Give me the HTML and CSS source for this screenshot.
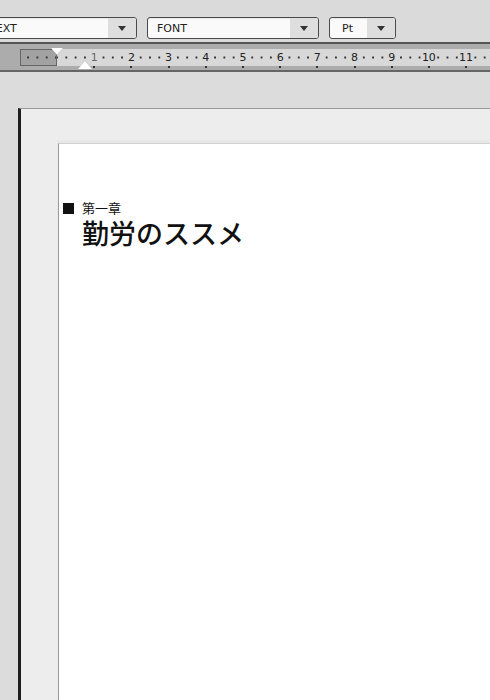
FILE: index.html
```html
<!DOCTYPE html>
<html lang="ja">
  <head>
    <meta charset="UTF-8" />
    <meta name="viewport" content="width=device-width, initial-scale=1.0" />
    <title>editor</title>
    <link rel="stylesheet" href="styles.css">
  </head>
  <body>
    <!-- toolbar with the three pickers -->
    <div class="toolbar">
      <div class="picker style-picker">
        <span class="picker-text">TEXT</span>
        <span class="picker-arrow"></span>
      </div>
      <div class="picker font-picker">
        <span class="picker-text">FONT</span>
        <span class="picker-arrow"></span>
      </div>
      <div class="picker size-picker">
        <span class="picker-text">Pt</span>
        <span class="picker-arrow"></span>
      </div>
    </div>

    <!-- ruler -->
    <div class="ruler">
      <div class="ruler-track">
        <div class="ruler-margin"></div>
        <div class="ruler-scale">
          <span class="num"><b>1</b></span>
          <span class="num"><b>2</b></span>
          <span class="num"><b>3</b></span>
          <span class="num"><b>4</b></span>
          <span class="num"><b>5</b></span>
          <span class="num"><b>6</b></span>
          <span class="num"><b>7</b></span>
          <span class="num"><b>8</b></span>
          <span class="num"><b>9</b></span>
          <span class="num"><b>10</b></span>
          <span class="num"><b>11</b></span>
        </div>
        <span class="indent-first"></span>
        <span class="indent-left"></span>
      </div>
    </div>

    <!-- document -->
    <div class="desk">
      <div class="sheet">
        <div class="page">
          <div class="chapter">
            <span class="mark"></span>
            <span>第一章</span>
          </div>
          <h1 class="title">勤労のススメ</h1>
        </div>
      </div>
    </div>
  </body>
</html>
```

FILE: styles.css
```css
body {
  margin: 0;
  padding: 0;
  width: 490px;
  height: 700px;
  overflow: hidden;
  background-color: #dcdcdc;
  font-family: "DejaVu Sans", sans-serif;
}

/* toolbar */
.toolbar {
  display: flex;
  height: 42px;
  box-sizing: border-box;
  padding-top: 17px;
  background-color: #dadada;
  overflow: hidden;
}
.picker {
  display: flex;
  flex-shrink: 0;
  height: 22px;
  box-sizing: border-box;
  border: 1px solid #4a4a4a;
  border-radius: 3px;
  background-color: #fafafa;
  box-shadow: inset 0 1px 0 #e6e6e6;
  overflow: hidden;
}
.picker-text {
  flex: 1;
  font-size: 11px;
  line-height: 22px;
  color: #222;
  padding-left: 9px;
}
.picker-arrow {
  width: 28px;
  background-color: #dedede;
  display: flex;
  align-items: center;
  justify-content: center;
}
.picker-arrow::before {
  content: "";
  border-left: 4px solid transparent;
  border-right: 4px solid transparent;
  border-top: 5px solid #333;
}
.style-picker {
  width: 154px;
  margin-left: -17px;
}
.style-picker .picker-text {
  padding-left: 5px;
}
.font-picker {
  width: 172px;
  margin-left: 10px;
}
.size-picker {
  width: 67px;
  margin-left: 10px;
}
.size-picker .picker-text {
  padding-left: 12px;
}

/* ruler */
.ruler {
  height: 30px;
  box-sizing: border-box;
  border-top: 2px solid #555;
  border-bottom: 2px solid #666;
  background-color: #acacac;
  padding-top: 5px;
}
.ruler-track {
  position: relative;
  display: flex;
  height: 17px;
  margin-left: 20px;
}
.ruler-margin {
  flex: 0 0 37px;
  box-sizing: border-box;
  border: 1px solid #666;
  background-color: #a2a2a2;
  background-image: radial-gradient(circle, #333 0.9px, transparent 1.3px);
  background-size: 9.3px 3px;
  background-repeat: repeat-x;
  background-position: calc(100% + 4.65px) center;
}
.ruler-scale {
  flex: 1;
  min-width: 0;
  display: flex;
  padding-left: 18.6px;
  background-color: #d8d8d8;
  background-image: radial-gradient(circle, #333 0.9px, transparent 1.3px);
  background-size: 9.3px 3px;
  background-repeat: repeat-x;
  background-position: -4.65px center;
}
.num {
  position: relative;
  flex: 0 0 37.2px;
  text-align: center;
  font-size: 11px;
  line-height: 17px;
  color: #222;
}
.num b {
  font-weight: normal;
  background-color: #d8d8d8;
  padding: 0 1px;
}
.num:first-child b {
  color: #666;
}
.num::after {
  content: "";
  position: absolute;
  left: 17.6px;
  bottom: -2px;
  width: 2px;
  height: 2px;
  background-color: #333;
}
.indent-first {
  position: absolute;
  left: 31px;
  top: -1px;
  border-left: 6px solid transparent;
  border-right: 6px solid transparent;
  border-top: 7px solid #fff;
  filter: drop-shadow(0 0 0.5px #666);
}
.indent-left {
  position: absolute;
  left: 58px;
  top: 12px;
  border-left: 7px solid transparent;
  border-right: 7px solid transparent;
  border-bottom: 8px solid #fff;
  filter: drop-shadow(0 0 0.5px #888);
}

/* document */
.desk {
  padding: 36px 0 0 18px;
}
.sheet {
  border-left: 3px solid #1e1e1e;
  border-top: 1px solid #999;
  background-color: #ededed;
  padding: 34px 0 0 37px;
  height: 557px;
}
.page {
  height: 557px;
  box-sizing: border-box;
  background-color: #fff;
  border-left: 1px solid #999;
  border-top: 1px solid #d2d2d2;
  box-shadow: 0 -2px 2px rgba(0, 0, 0, 0.04);
  padding: 57px 0 0 4px;
  font-family: "Noto Sans CJK JP", sans-serif;
  color: #111;
}
.chapter {
  display: flex;
  align-items: center;
  gap: 8px;
  font-size: 13px;
  line-height: 14px;
}
.mark {
  width: 11px;
  height: 11px;
  background-color: #111;
}
.title {
  margin: 0 0 0 19px;
  font-size: 27px;
  line-height: 36px;
  font-weight: 500;
}
```
